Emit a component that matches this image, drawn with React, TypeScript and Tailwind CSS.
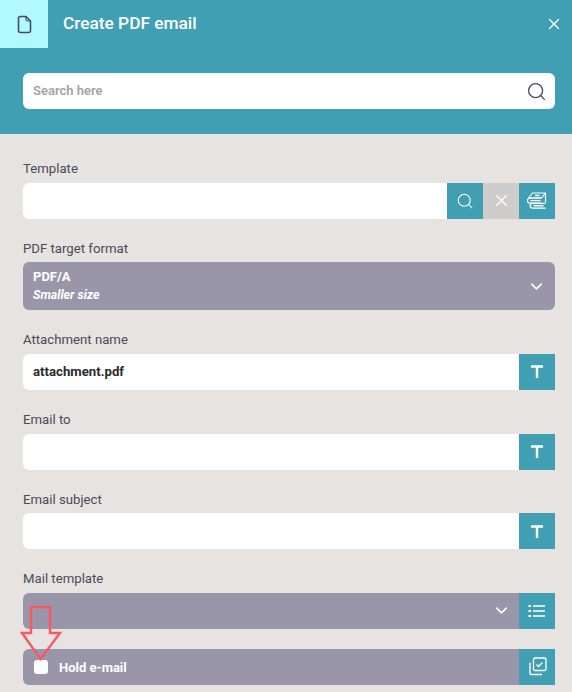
import React from "react";
import { ChevronDown, Search, X } from "lucide-react";

function FileIcon() {
  return (
    <svg width="24" height="24" viewBox="0 0 24 24" fill="none" stroke="#4a4a5e" strokeWidth="1.6" strokeLinejoin="round">
      <path d="M8.500 4.500h5.500l4.500 4.500v9.500a2 2 0 0 1-2 2h-8a2 2 0 0 1-2-2v-12a2 2 0 0 1 2-2z" />
      <path d="M14 4.500v3a1.500 1.500 0 0 0 1.500 1.500h3" strokeWidth="1.2" />
    </svg>
  );
}

function TIcon() {
  return (
    <svg width="12" height="13" viewBox="0 0 12 13" fill="none" stroke="white" strokeWidth="2.4">
      <path d="M0 1.500h12M6 1.500V13" />
    </svg>
  );
}

function BooksIcon() {
  return (
    <svg width="20" height="17" viewBox="0 0 20 17" fill="none" stroke="white" strokeWidth="1.2" strokeLinejoin="round">
      <path d="M1.500 6L5.500 1H18.500V5" />
      <path d="M1.500 6H14.500L18.500 1" />
      <path d="M8 3.500h4.500" strokeWidth="1.500" />
      <path d="M14.500 6H3a2.500 2.500 0 0 0 0 5.200h11.500" />
      <path d="M3.500 8.600h10" />
      <path d="M18.500 5V10.500" />
      <path d="M18.500 11.300H5.500a2.400 2.400 0 0 0 0 4.800h13" />
      <path d="M6.500 13.700h10" strokeWidth="1.500" />
    </svg>
  );
}

function ListIcon() {
  return (
    <svg width="18" height="14" viewBox="0 0 18 14" fill="none" stroke="white" strokeWidth="1.6">
      <path d="M5 2h12M5 7h12M5 12h12" />
      <path d="M0.500 2h2.500M0.500 7h2.500M0.500 12h2.500" strokeWidth="2.200" />
    </svg>
  );
}

function ChecksIcon() {
  return (
    <svg width="19" height="19" viewBox="0 0 19 19" fill="none" stroke="white" strokeWidth="1.300">
      <rect x="5.500" y="1" width="12.500" height="12.500" rx="1.500" />
      <path d="M8.500 7.500l2 2 4-4" />
      <path d="M2 5.500v11a1 1 0 0 0 1 1h11" />
    </svg>
  );
}

function Field({ label, children }: { label: string; children: React.ReactNode }) {
  return (
    <div className="mt-5">
      <div className="h-[23.6px] text-[13.2px] leading-[19px] text-[#4a4a5a]">{label}</div>
      <div className="flex">{children}</div>
    </div>
  );
}

function SideButton({ children, gray }: { children: React.ReactNode; gray?: boolean }) {
  return (
    <button className={`flex h-9 w-9 shrink-0 items-center justify-center ${gray ? "bg-[#cfcdcb]" : "bg-[#419fb3]"}`}>
      {children}
    </button>
  );
}

export default function App() {
  return (
    <div className="relative h-[692px] w-[572px] overflow-hidden bg-[#e7e3e0] font-['Roboto',sans-serif]">
      <div className="h-[134px] bg-[#419fb3]">
        <div className="flex h-12 items-center">
          <div className="flex h-12 w-12 items-center justify-center bg-[#b2f9ff]">
            <FileIcon />
          </div>
          <div className="ml-[15px] flex-1 text-[17.3px] font-medium text-white">Create PDF email</div>
          <X className="mr-[9px] text-white" size={18} strokeWidth={1.8} />
        </div>
        <div className="ml-[23px] mr-[17px] mt-[25px] flex h-9 items-center justify-between rounded-md bg-white pl-[10px] pr-2">
          <span className="text-[13px] font-semibold text-[#a3a3a3]">Search here</span>
          <Search className="text-[#4a4a5e]" size={21} strokeWidth={1.5} />
        </div>
      </div>

      <div className="pl-[23px] pr-[17px] pt-[5.2px]">
        <Field label="Template">
          <div className="h-9 flex-1 rounded-l-md bg-white" />
          <SideButton><Search className="text-white" size={18} strokeWidth={1.4} /></SideButton>
          <SideButton gray><X className="text-white" size={19} strokeWidth={1.6} /></SideButton>
          <SideButton><BooksIcon /></SideButton>
        </Field>

        <Field label="PDF target format">
          <div className="flex h-12 flex-1 items-center justify-between rounded-md bg-[#9a96aa] pl-[10px] pr-[9px] text-white">
            <div className="font-bold leading-[18px]">
              <div className="text-[13px]">PDF/A</div>
              <div className="text-[12.4px] italic">Smaller size</div>
            </div>
            <ChevronDown size={19} strokeWidth={2} />
          </div>
        </Field>

        <Field label="Attachment name">
          <div className="flex h-9 flex-1 items-center rounded-l-md bg-white pl-[10px] text-[13.2px] font-bold text-[#2b2b2b]">attachment.pdf</div>
          <SideButton><TIcon /></SideButton>
        </Field>

        <Field label="Email to">
          <div className="h-9 flex-1 rounded-l-md bg-white" />
          <SideButton><TIcon /></SideButton>
        </Field>

        <Field label="Email subject">
          <div className="h-9 flex-1 rounded-l-md bg-white" />
          <SideButton><TIcon /></SideButton>
        </Field>

        <Field label="Mail template">
          <div className="flex h-9 flex-1 items-center justify-end rounded-l-md bg-[#9a96aa] pr-2 text-white">
            <ChevronDown size={19} strokeWidth={2} />
          </div>
          <SideButton><ListIcon /></SideButton>
        </Field>

        <div className="mt-5 flex">
          <div className="flex h-9 flex-1 items-center rounded-l-md bg-[#9a96aa] pl-[11px]">
            <div className="h-[14px] w-[14px] rounded-[3px] bg-white" />
            <span className="ml-[11px] mt-[2px] text-[13px] font-bold text-white">Hold e-mail</span>
          </div>
          <SideButton><ChecksIcon /></SideButton>
        </div>
      </div>

      <svg className="absolute left-[20px] top-[604px]" width="42" height="58" viewBox="0 0 42 58" fill="none" stroke="#f7595f" strokeWidth="2.4">
        <path d="M11 3h19v26h10L20.500 55 2 29h9z" />
      </svg>
    </div>
  );
}
